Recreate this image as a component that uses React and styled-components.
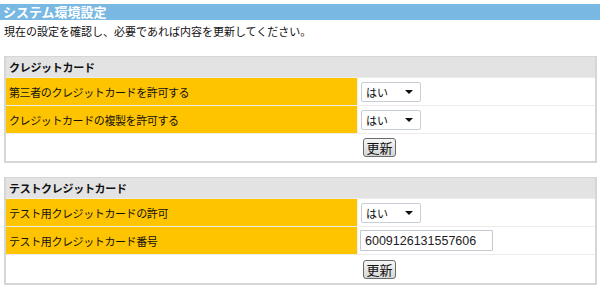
import React from 'react'
import styled, { createGlobalStyle } from 'styled-components'

const GlobalStyle = createGlobalStyle`
  body {
    margin: 0;
    background: #fff;
    font-family: "Noto Sans CJK JP", "Liberation Sans", sans-serif;
    font-size: 11px;
    color: #111;
  }
`

const Page = styled.div`
  padding-top: 4px;
  width: 600px;
`

const TitleBar = styled.h1`
  margin: 0;
  height: 16px;
  line-height: 16px;
  padding-left: 3px;
  background: #78b8e2;
  color: #fff;
  font-size: 13px;
  font-weight: bold;
`

const Lead = styled.p`
  margin: 3px 0 0 4px;
  line-height: 17px;
  font-size: 11px;
`

const Section = styled.section`
  margin: ${(p) => p.$top}px 3px 0 4px;
  border: 2px solid #d6d6d6;
  border-top-width: 1px;
  background: #fff;
`

const SectionHead = styled.div`
  height: 20px;
  line-height: 20px;
  padding-left: 3px;
  background: #e3e3e3;
  font-weight: bold;
  font-size: 11px;
  letter-spacing: -0.3px;
`

const Row = styled.div`
  display: grid;
  grid-template-columns: 351px 1fr;
  height: ${(p) => p.$h || 27}px;
  border-top: 1px solid #ececec;
`

const Label = styled.div`
  display: flex;
  align-items: center;
  padding-left: 3px;
  background: ${(p) => (p.$empty ? '#fff' : '#ffc400')};
  font-size: 11px;
  letter-spacing: -0.4px;
`

const Value = styled.div`
  display: flex;
  align-items: center;
  padding-left: 3px;
  border-left: 1px solid ${(p) => (p.$plain ? '#fff' : '#f0f0f0')};
`

const Select = styled.div`
  box-sizing: border-box;
  width: 60px;
  height: 20px;
  display: flex;
  align-items: center;
  justify-content: space-between;
  padding: 0 7px 0 4px;
  border: 1px solid #c8ced6;
  border-radius: 2px;
  background: #fff;
  font-size: 11px;
`

const TextInput = styled.input`
  box-sizing: border-box;
  width: 133px;
  height: 21px;
  margin-left: -1px;
  padding: 0 4px;
  border: 1px solid #c3c9d1;
  border-radius: 1px;
  font-family: "Liberation Sans", Arial, sans-serif;
  font-size: 12.5px;
  color: #222;
  outline: none;
`

const Button = styled.button`
  box-sizing: border-box;
  width: 33px;
  height: 19px;
  padding: 0;
  margin-left: 2px;
  border: 1px solid #6b6b6b;
  border-radius: 3px;
  background: linear-gradient(#f6f6f6, #d6d6d6);
  font-family: "Noto Sans CJK JP", sans-serif;
  font-size: 13px;
  line-height: 17px;
  color: #111;
`

const Caret = () => (
  <svg width="8" height="4" viewBox="0 0 8 4">
    <polygon points="0,0 8,0 4,4" fill="#111" />
  </svg>
)

const YesSelect = () => (
  <Select>
    <span>はい</span>
    <Caret />
  </Select>
)

export default function App() {
  return (
    <Page>
      <GlobalStyle />
      <TitleBar>システム環境設定</TitleBar>
      <Lead>現在の設定を確認し、必要であれば内容を更新してください。</Lead>

      <Section $top={16}>
        <SectionHead>クレジットカード</SectionHead>
        <Row>
          <Label>第三者のクレジットカードを許可する</Label>
          <Value><YesSelect /></Value>
        </Row>
        <Row>
          <Label>クレジットカードの複製を許可する</Label>
          <Value><YesSelect /></Value>
        </Row>
        <Row>
          <Label $empty />
          <Value $plain><Button>更新</Button></Value>
        </Row>
      </Section>

      <Section $top={14}>
        <SectionHead>テストクレジットカード</SectionHead>
        <Row>
          <Label>テスト用クレジットカードの許可</Label>
          <Value><YesSelect /></Value>
        </Row>
        <Row>
          <Label>テスト用クレジットカード番号</Label>
          <Value><TextInput defaultValue="6009126131557606" /></Value>
        </Row>
        <Row $h={28}>
          <Label $empty />
          <Value $plain><Button>更新</Button></Value>
        </Row>
      </Section>
    </Page>
  )
}
